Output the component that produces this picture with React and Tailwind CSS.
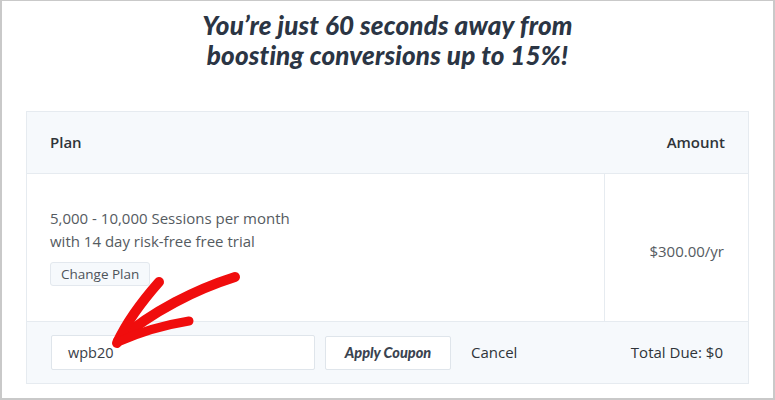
import React from 'react';

const Arrow = () => (
  <svg
    className="absolute left-0 top-0 pointer-events-none"
    width="775"
    height="400"
    viewBox="0 0 775 400"
  >
    <g fill="none" stroke="#f00d0d" strokeLinecap="round" strokeLinejoin="round">
      {/* shaft */}
      <path d="M233 276 C 195 288, 150 310, 116 340" strokeWidth="10" />
      {/* upper barb */}
      <path d="M157 281 C 142 298, 126 318, 115 342" strokeWidth="10" />
      {/* lower barb */}
      <path d="M187 320 C 162 324, 138 331, 116 341" strokeWidth="9" />
    </g>
  </svg>
);

const App = () => {
  return (
    <div
      className="relative w-[775px] h-[400px] bg-white border-l-2 border-r-2 border-b-2 border-t border-[#c9c9c9] overflow-hidden"
      style={{ fontFamily: '"Open Sans", Lato, sans-serif' }}
    >
      {/* Heading */}
      <h1
        className="pt-[9px] text-center text-[26px] leading-[30px] font-black italic text-[#2b3544] tracking-[0.2px]"
        style={{ fontFamily: 'Lato, sans-serif' }}
      >
        You’re just 60 seconds away from
        <br />
        boosting conversions up to 15%!
      </h1>

      {/* Order table */}
      <div className="ml-[24px] mt-[41px] w-[723px] border border-[#e6ebf0]">
        <div className="flex items-center justify-between h-[62px] bg-[#f6f9fc] border-b border-[#e6ebf0] px-[23px] text-[15px] font-semibold text-[#2f3439]">
          <span>Plan</span>
          <span>Amount</span>
        </div>

        <div className="flex h-[148px] border-b border-[#e6ebf0]">
          <div className="flex-1 flex flex-col justify-center pl-[23px] pb-[2px] border-r border-[#e6ebf0]">
            <p className="text-[15px] leading-[23px] text-[#555b61]">
              5,000 - 10,000 Sessions per month
              <br />
              with 14 day risk-free free trial
            </p>
            <button className="mt-[9px] self-start h-[24px] px-[10px] rounded-[3px] bg-[#f6f9fc] border border-[#e3e8ee] text-[13.5px] text-[#4d5359]">
              Change Plan
            </button>
          </div>
          <div className="w-[143px] flex items-center justify-end pr-[24px] pt-[8px] text-[15px] text-[#555b61]">
            $300.00/yr
          </div>
        </div>

        <div className="flex items-center h-[61px] bg-[#f6f9fc] pl-[24px] pr-[25px]">
          <div className="w-[264px] h-[35px] bg-white border border-[#dfe5eb] rounded-[2px] flex items-center pl-[16px] text-[14.5px] text-[#3a4047]">
            wpb20
          </div>
          <button
            className="ml-[10px] w-[126px] h-[34px] bg-white border border-[#dfe5eb] rounded-[2px] text-[14.5px] font-black italic text-[#3a4350]"
            style={{ fontFamily: 'Lato, sans-serif' }}
          >
            Apply Coupon
          </button>
          <span className="ml-[20px] text-[15px] text-[#2f3439]">Cancel</span>
          <span className="ml-auto text-[15px] font-medium text-[#2f3439]">Total Due: $0</span>
        </div>
      </div>

      <Arrow />
    </div>
  );
};

export default App;
